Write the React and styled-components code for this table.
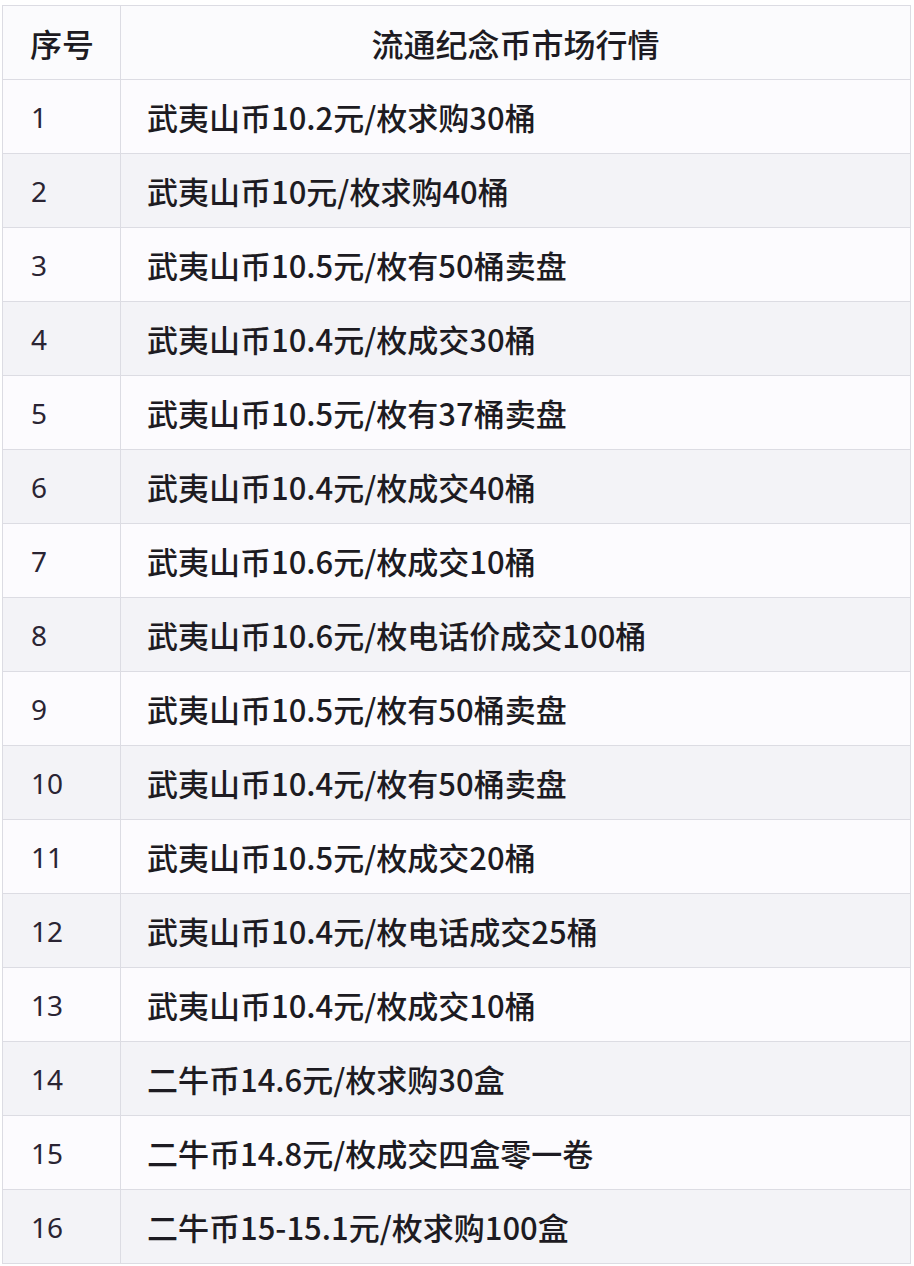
import React from 'react';
import styled, { createGlobalStyle } from 'styled-components';

const GlobalStyle = createGlobalStyle`
  html, body {
    margin: 0;
    padding: 0;
    background: #ffffff;
  }
  body {
    font-family: "Noto Sans CJK SC", "Noto Sans", sans-serif;
    color: #1d1b22;
  }
`;

const Page = styled.div`
  padding: 5px 3px 0 2px;
`;

const Table = styled.table`
  width: 909px;
  border-collapse: collapse;
  table-layout: fixed;
`;

const HeadCell = styled.th`
  height: 73px;
  padding: 0 0 0 ${(p) => (p.$center ? 0 : 27)}px;
  border: 1px solid #dcdce3;
  background: #fbfbfd;
  font-size: 32px;
  font-weight: 500;
  text-align: ${(p) => (p.$center ? 'center' : 'left')};
  color: #1d1b22;
`;

const Row = styled.tr`
  background: ${(p) => (p.$alt ? '#f3f3f7' : '#fcfbfe')};
`;

const NumCell = styled.td`
  height: 73px;
  padding: 0 0 0 28px;
  border: 1px solid #dcdce3;
  font-family: "Noto Sans", "Noto Sans CJK SC", sans-serif;
  font-size: 28px;
  font-weight: 400;
  color: #2a2433;
`;

const TextCell = styled.td`
  height: 73px;
  padding: 0 0 0 26px;
  border: 1px solid #dcdce3;
  font-size: 31px;
  font-weight: 500;
  color: #1d1b22;
  white-space: nowrap;
`;

const rows = [
  '武夷山币10.2元/枚求购30桶',
  '武夷山币10元/枚求购40桶',
  '武夷山币10.5元/枚有50桶卖盘',
  '武夷山币10.4元/枚成交30桶',
  '武夷山币10.5元/枚有37桶卖盘',
  '武夷山币10.4元/枚成交40桶',
  '武夷山币10.6元/枚成交10桶',
  '武夷山币10.6元/枚电话价成交100桶',
  '武夷山币10.5元/枚有50桶卖盘',
  '武夷山币10.4元/枚有50桶卖盘',
  '武夷山币10.5元/枚成交20桶',
  '武夷山币10.4元/枚电话成交25桶',
  '武夷山币10.4元/枚成交10桶',
  '二牛币14.6元/枚求购30盒',
  '二牛币14.8元/枚成交四盒零一卷',
  '二牛币15-15.1元/枚求购100盒',
];

export default function App() {
  return (
    <Page>
      <GlobalStyle />
      <Table>
        <colgroup>
          <col style={{ width: 118 }} />
          <col />
        </colgroup>
        <thead>
          <tr>
            <HeadCell>序号</HeadCell>
            <HeadCell $center>流通纪念币市场行情</HeadCell>
          </tr>
        </thead>
        <tbody>
          {rows.map((text, i) => (
            <Row key={i} $alt={i % 2 === 1}>
              <NumCell>{i + 1}</NumCell>
              <TextCell>{text}</TextCell>
            </Row>
          ))}
        </tbody>
      </Table>
    </Page>
  );
}
